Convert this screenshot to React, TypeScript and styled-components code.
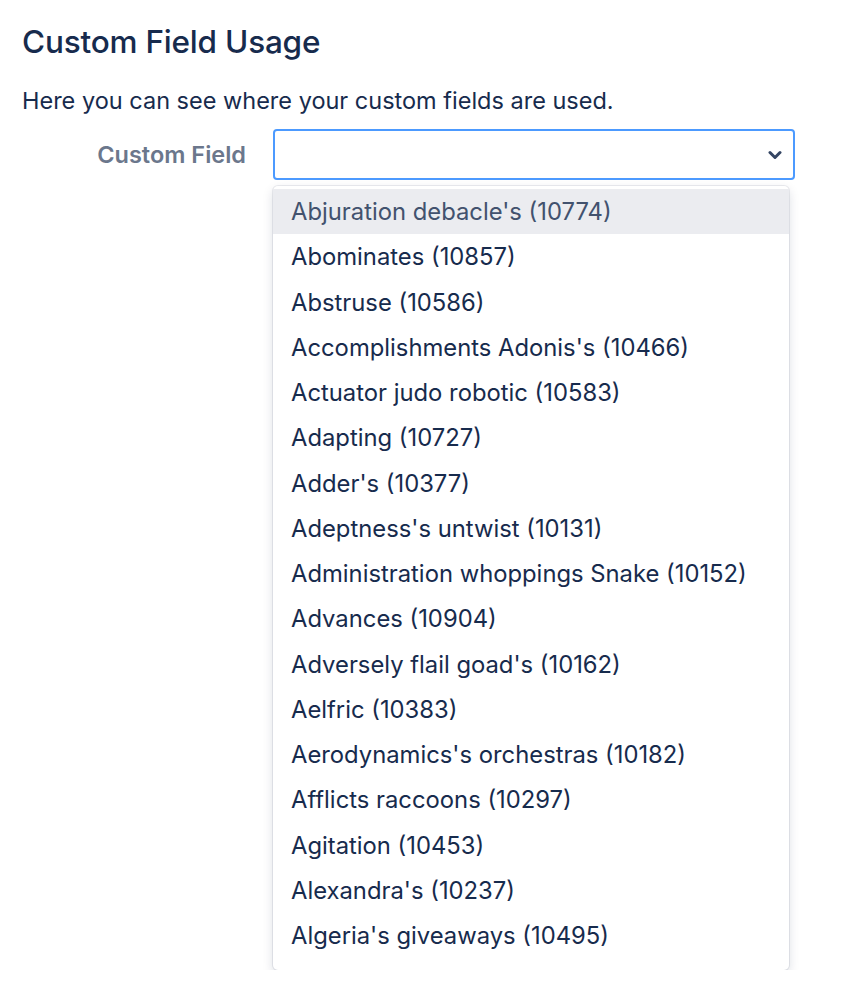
import React from "react";
import styled, { createGlobalStyle } from "styled-components";

const Global = createGlobalStyle`
  html, body { margin: 0; padding: 0; background: #fff; }
  body { font-family: Inter, "Noto Sans", "Liberation Sans", sans-serif; color: #172B4D; }
`;

const Page = styled.div`
  padding: 22px 22px 0 22px;
`;

const Title = styled.h1`
  margin: 0;
  font-size: 31.5px;
  line-height: 40px;
  font-weight: 500;
  color: #172B4D;
  letter-spacing: -0.2px;
`;

const Intro = styled.p`
  margin: 23px 0 0 0;
  font-size: 23.5px;
  line-height: 32px;
  color: #172B4D;
`;

const FieldRow = styled.div`
  display: flex;
  align-items: flex-start;
  gap: 27px;
  margin-top: 12px;
`;

const Label = styled.label`
  width: 224px;
  text-align: right;
  font-size: 23.5px;
  font-weight: 600;
  color: #6B778C;
  line-height: 51px;
`;

const SelectWrap = styled.div`
  display: flex;
  flex-direction: column;
  width: 522px;
`;

const SelectBox = styled.div`
  box-sizing: border-box;
  height: 51px;
  border: 2px solid #4C9AFF;
  border-radius: 4px;
  background: #fff;
  display: flex;
  align-items: center;
  justify-content: flex-end;
  padding-right: 11px;
`;

const Menu = styled.div`
  margin-top: 6px;
  width: 516px;
  box-sizing: border-box;
  background: #fff;
  border-radius: 5px;
  padding: 3px 0 12px 0;
  box-shadow: 0 0 0 1px rgba(9, 30, 66, 0.08), 0 4px 11px rgba(9, 30, 66, 0.15);
`;

const Option = styled.div<{ $active?: boolean }>`
  height: 45.25px;
  display: flex;
  align-items: center;
  padding-left: 18px;
  font-size: 23.8px;
  color: ${(p) => (p.$active ? "#42526E" : "#172B4D")};
  background: ${(p) => (p.$active ? "#EBECF0" : "transparent")};
`;

const options = [
  "Abjuration debacle's (10774)",
  "Abominates (10857)",
  "Abstruse (10586)",
  "Accomplishments Adonis's (10466)",
  "Actuator judo robotic (10583)",
  "Adapting (10727)",
  "Adder's (10377)",
  "Adeptness's untwist (10131)",
  "Administration whoppings Snake (10152)",
  "Advances (10904)",
  "Adversely flail goad's (10162)",
  "Aelfric (10383)",
  "Aerodynamics's orchestras (10182)",
  "Afflicts raccoons (10297)",
  "Agitation (10453)",
  "Alexandra's (10237)",
  "Algeria's giveaways (10495)",
];

const Chevron = () => (
  <svg width="14" height="10" viewBox="0 0 14 10" aria-hidden="true">
    <path
      d="M2 2.5 L7 7.5 L12 2.5"
      fill="none"
      stroke="#344563"
      strokeWidth="3"
      strokeLinecap="round"
      strokeLinejoin="round"
    />
  </svg>
);

export default function App() {
  return (
    <>
      <Global />
      <Page>
        <Title>Custom Field Usage</Title>
        <Intro>Here you can see where your custom fields are used.</Intro>
        <FieldRow>
          <Label>Custom Field</Label>
          <SelectWrap>
            <SelectBox>
              <Chevron />
            </SelectBox>
            <Menu>
              {options.map((o, i) => (
                <Option key={o} $active={i === 0}>
                  {o}
                </Option>
              ))}
            </Menu>
          </SelectWrap>
        </FieldRow>
      </Page>
    </>
  );
}
